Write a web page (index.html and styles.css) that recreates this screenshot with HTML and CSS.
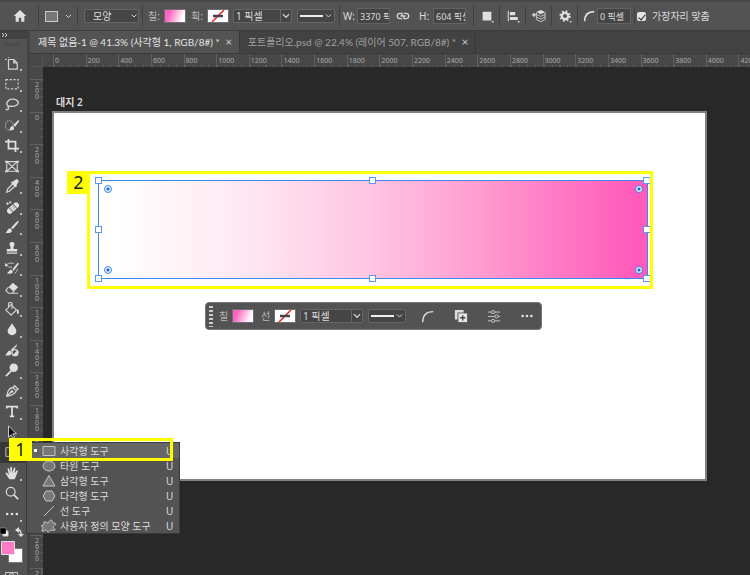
FILE: index.html
```html
<!DOCTYPE html>
<html lang="ko">
<head>
<meta charset="utf-8">
<meta name="viewport" content="width=device-width, initial-scale=1">
<title>제목 없음-1</title>
<link rel="stylesheet" href="styles.css">
</head>
<body>
<header class="options">
  <button class="opt home" aria-label="홈"><svg class="ic" viewBox="0 0 16 16"><path class="f" d="M8 1 .8 8H3v6.5h3.6V10h2.8v4.5H13V8h2.2z"/></svg></button>
  <i class="sep"></i>
  <button class="opt preset" aria-label="사각형 도구"><svg width="28" height="14" viewBox="0 0 28 14"><rect x="1.5" y="2.500" width="12" height="10" fill="#777" stroke="#ccc"/><path class="s" d="m22 6 2.500 2.500L27 6"/></svg></button>
  <i class="sep"></i>
  <label class="pick mode"><select aria-label="모드"><option>모양</option></select><svg class="chev" viewBox="0 0 8 8"><path class="s" d="m1.500 2.500 2.500 2.500 2.500-2.500"/></svg></label>
  <i class="sep"></i>
  <span class="cap">칠:</span>
  <button class="swatch pink" aria-label="칠"></button>
  <span class="cap">획:</span>
  <button class="swatch none" aria-label="획"><svg viewBox="0 0 20 12"><path d="m4 12 12-12" stroke="#e22" stroke-width="1.500"/><path d="M5 6h10" stroke="#444" stroke-width="2.500"/></svg></button>
  <label class="pick size"><select aria-label="획 폭"><option>1 픽셀</option></select><svg class="chev" viewBox="0 0 8 8"><path class="s" d="m1.500 2.500 2.500 2.500 2.500-2.500"/></svg></label>
  <button class="line" aria-label="획 유형"><svg viewBox="0 0 36 12"><path d="M2 6h23" stroke="#eee" stroke-width="2"/><path class="s" d="m28 4.500 2.500 2.500 2.500-2.500"/></svg></button>
  <i class="sep"></i>
  <label class="dim"><span>W:</span><input value="3370 픽셀"></label>
  <button class="opt link" aria-label="비율 연결"><svg class="ic" viewBox="0 0 16 16"><path class="s" stroke-width="1.500" d="M7 11H4.500a3 3 0 0 1 0-6H7v3.500M9 5h2.500a3 3 0 0 1 0 6H9V7.500M5 8h6"/></svg></button>
  <label class="dim"><span>H:</span><input value="604 픽셀"></label>
  <i class="sep wide"></i>
  <button class="opt tail" aria-label="패스 작업"><svg class="ic" viewBox="0 0 16 16"><path class="f" d="M3 3h10v10H3zM13 14h3l-1.500 2z"/></svg></button>
  <i class="sep"></i>
  <button class="opt tail" aria-label="패스 정렬"><svg class="ic" viewBox="0 0 16 16"><path class="f" d="M2 2h1.200v12H2zM4.500 3.500h6v3.500h-6zM4.500 9h9v3.500h-9zM13 14h3l-1.500 2z"/></svg></button>
  <i class="sep"></i>
  <button class="opt tail" aria-label="패스 배열"><svg class="ic" viewBox="0 0 16 16"><path class="f" d="m10 1 5 2.500-5 2.500-5-2.500zM0 6h1.500V4.500h1.500V6h1.500v1.300H3v1.500H1.500V7.300H0z"/><path class="s" d="m5 6 5 2.500L15 6M5 9l5 2.500L15 9M5 12l5 2.500 5-2.500M5 4v8M15 4v8"/></svg></button>
  <i class="sep"></i>
  <button class="opt tail" aria-label="설정"><svg class="ic" viewBox="0 0 16 16"><circle cx="8" cy="8" r="3.600" fill="none" stroke="#e0e0e0" stroke-width="2.600"/><circle cx="8" cy="8" r="5.500" fill="none" stroke="#e0e0e0" stroke-width="2" stroke-dasharray="2.160 2.160"/><path class="f" d="M13 14h3l-1.500 2z"/></svg></button>
  <i class="sep"></i>
  <label class="dim radius"><svg class="ic" viewBox="0 0 16 16"><path fill="none" stroke="#e0e0e0" stroke-width="1.800" d="M3 14C3 7 7 3 14 3"/></svg><input aria-label="반경" value="0 픽셀"></label>
  <i class="sep"></i>
  <label class="snap"><input type="checkbox" checked>가장자리 맞춤</label>
</header>

<div class="work">
  <aside class="rail">
    <div class="railhead"><svg width="8" height="6" viewBox="0 0 8 6"><path class="s" d="m1 1 2 2-2 2M4 1l2 2-2 2"/></svg></div>
    <div class="grip"></div>
    <nav class="tools" aria-label="도구">
      <button class="tool more" aria-label="대지"><svg class="ic" viewBox="0 0 16 16"><path class="s" stroke-width="1.400" d="M4 1v1M4 4v11h10V8l-4-4H4M0 4h2M10 4v4h4"/></svg></button>
      <button class="tool more" aria-label="선택 윤곽"><svg class="ic" viewBox="0 0 16 16"><rect class="s" stroke-width="1.300" x="1" y="3" width="14" height="10.500" stroke-dasharray="2.500 1.800"/></svg></button>
      <button class="tool more" aria-label="올가미"><svg class="ic" viewBox="0 0 16 16"><path class="s" stroke-width="1.500" d="M4 10.500C0 8 3 2.500 9 2.500s8 5 4 7c-3 2-7 1-9 1-2 1 1 2 0 3-1 2-3 1-3 0"/></svg></button>
      <button class="tool more" aria-label="빠른 선택"><svg class="ic" viewBox="0 0 16 16"><ellipse class="s" cx="5" cy="8.500" rx="4.500" ry="5.500" stroke-dasharray="1.500 1"/><path class="f" d="M15.500 2 9.500 8l2 2 4.500-6zM8.500 9c-3 0-2 4-4 4.500 3 1.500 6 0 6-2.500z"/></svg></button>
      <button class="tool more" aria-label="자르기"><svg class="ic" viewBox="0 0 16 16"><path fill="none" stroke="#e0e0e0" stroke-width="2" d="M4 1v11h12M0 4h12v12"/></svg></button>
      <button class="tool" aria-label="프레임"><svg class="ic" viewBox="0 0 16 16"><path class="s" stroke-width="1.300" d="M2 3h12v11H2zM2 3l12 11M14 3 2 14"/><path class="f" d="M0 2h3v2H0zM13 2h3v2h-3zM0 13h3v2H0zM13 13h3v2h-3z"/></svg></button>
      <button class="tool more" aria-label="스포이드"><svg class="ic" viewBox="0 0 16 16"><path class="s" stroke-width="1.500" d="M9 5.500 3 11.500 2 15l3-1 6.500-6"/><path class="f" d="m8 3 1.500-.5L12 .8c2-1.300 4.500 1 3.200 3L13 7l1 1-2 1.500L6.500 4z"/></svg></button>
      <button class="tool more" aria-label="복구 브러시"><svg class="ic" viewBox="0 0 16 16"><g transform="rotate(-42 9 9)"><rect class="f" x="1" y="6" width="16" height="6.500" rx="3"/><path d="M6 6v7M12 6v7M8 8h1m1 0h1M8 10h1m1 0h1" stroke="#555"/></g><path class="s" d="M1 4h4M3 2v4M6 1v3M4.500 2.500h3"/></svg></button>
      <button class="tool more" aria-label="브러시"><svg class="ic" viewBox="0 0 16 16"><path class="f" d="M15.500 1c1 1-5 8-7 9.500L7 9c2-2 7.500-9 8.500-8zM6 9.500 8 12c-.5 3-4 3.500-7.500 2.500C3 13.500 2.500 10 6 9.500z"/></svg></button>
      <button class="tool more" aria-label="도장"><svg class="ic" viewBox="0 0 16 16"><path class="f" d="M8 1c3 0 3.500 2.500 2 5-.5 1-.5 2 0 3h4v3H2V9h4c.5-1 .5-2 0-3-1.500-2.500-1-5 2-5zM2 13h12v1.500H2z"/></svg></button>
      <button class="tool more" aria-label="작업 내역 브러시"><svg class="ic" viewBox="0 0 16 16"><path class="f" d="m14.500 2-6 7.500L10 11l6-8zM7.500 10 9 12c0 2.500-4 3-7 2 3-1 2-4 5.500-4zM0 2l4 4H0z"/><path class="s" d="M2 4c3-2 6-2 8-1M4 7h4M14 9c0 3-1 4-3 5"/></svg></button>
      <button class="tool more" aria-label="지우개"><svg class="ic" viewBox="0 0 16 16"><path class="f" d="m9 2 6 5-5 5-6-5z"/><path class="s" stroke-width="1.300" d="m4 7-3 3.500L4 14h4l2.500-2.500M8 14h7"/></svg></button>
      <button class="tool more" aria-label="페인트 통"><svg class="ic" viewBox="0 0 16 16"><path class="s" stroke-width="1.300" d="m7 3 6 6-6 6-6-6zM4 7V2c0-2 4-2 4 0v6"/><path class="f" d="M14 8c2 1 2 3 1.500 6-2 0-2.500-3-1.500-6z"/></svg></button>
      <button class="tool more" aria-label="흐림 효과"><svg class="ic" viewBox="0 0 16 16"><path class="f" d="M8 1c1 3 5 6 5 9.500a5 4.500 0 0 1-10 0C3 7 7 4 8 1z"/></svg></button>
      <button class="tool" aria-label="조정 브러시"><svg class="ic" viewBox="0 0 16 16"><path class="f" d="M14 1 6.500 8 8 9.500 13 4zM6 8.500 7.500 11C7 14 4 15 0 14c2.500-1 2-5 6-5.500z"/><circle class="s" stroke-width="1.400" cx="11.500" cy="11" r="3.500"/><path class="f" d="m9 14 5-6c3 3-1 8-5 6z"/></svg></button>
      <button class="tool more" aria-label="닷지"><svg class="ic" viewBox="0 0 16 16"><circle class="f" cx="10" cy="5.500" r="4.800"/><path d="m7 9-6 6" stroke="#e0e0e0" stroke-width="2"/></svg></button>
      <button class="tool more" aria-label="펜"><svg class="ic" viewBox="0 0 16 16"><path class="s" stroke-width="1.500" d="m11 2 4 4-2 1c-1 4-4 6-11 7 1-6 2-9 7-10zM2 14l6-6M12 7 9 4"/><circle class="f" cx="8" cy="8.500" r="1.500"/></svg></button>
      <button class="tool more" aria-label="문자"><svg class="ic" viewBox="0 0 16 16"><path d="M2 5V3h12v2M8 3v11M5.500 14h5" fill="none" stroke="#e0e0e0" stroke-width="2"/></svg></button>
      <button class="tool more" aria-label="패스 선택"><svg class="ic" viewBox="0 0 16 16"><path d="M4 1v13l3-3 2 4 2-1-2-4h4z" fill="#111" stroke="#ddd"/></svg></button>
      <button class="tool current" aria-label="사각형"><svg class="ic" viewBox="0 0 16 16"><path class="s" d="M1 3h14v10H1z"/></svg></button>
      <button class="tool more" aria-label="손"><svg class="ic" viewBox="0 0 16 16"><path class="f" d="M5 15 1 9c-1-2 1-2 2-.5L4.500 10 3 4c-.4-1.800 1.300-2 1.800-.5L6.200 8 6 2c0-1.600 1.800-1.600 2 0l.4 6L10 2.500c.4-1.500 2-1 1.800.5L11 8.500l2-3c.8-1.200 2.200-.5 1.500 1L12 13l-1 2z"/></svg></button>
      <button class="tool" aria-label="돋보기"><svg class="ic" viewBox="0 0 16 16"><circle class="s" stroke-width="1.500" cx="6.500" cy="6.500" r="5"/><path d="m10 10 5 5" stroke="#e0e0e0" stroke-width="2"/></svg></button>
      <button class="tool more" aria-label="도구 모음 편집"><svg class="ic" viewBox="0 0 16 16"><circle class="f" cx="2.500" cy="8" r="1.500"/><circle class="f" cx="8" cy="8" r="1.500"/><circle class="f" cx="13.500" cy="8" r="1.500"/></svg></button>
    </nav>
    <svg class="colors" viewBox="0 0 27 51" aria-hidden="true">
      <path d="M3 7h5v5H3z" fill="#fff" stroke="#ccc"/><path d="M0 4h6v6H0z" fill="#000" stroke="#aaa" stroke-width=".5"/>
      <path fill="none" stroke="#e0e0e0" stroke-width="1.500" d="M17 6h2q2 0 2 5"/><path class="f" d="m15 6 4-3v6zM18 10h6l-3 3z"/>
      <path d="M8.500 24.500h14v14h-14z" fill="#fff" stroke="#777"/><path d="M1.500 17.500h13v13h-13z" fill="#ff7ac5" stroke="#e0e0e0"/>
      <path d="M5.500 48.500h12v6h-12z" fill="none" stroke="#ccc"/><circle cx="11.500" cy="52" r="2.500" fill="none" stroke="#ccc"/>
    </svg>
  </aside>

  <main class="doc">
    <div class="tabs" role="tablist">
      <div class="tab on" role="tab" aria-selected="true"><span>제목 없음-1 @ 41.3% (사각형 1, RGB/8#) *</span><button aria-label="닫기">×</button></div>
      <div class="tab" role="tab" aria-selected="false"><span>포트폴리오.psd @ 22.4% (레이어 507, RGB/8#) *</span><button aria-label="닫기">×</button></div>
    </div>
    <div class="rulerx"><div class="corner"></div><div class="marksx">
      <span>0</span><span>200</span><span>400</span><span>600</span><span>800</span><span>1000</span><span>1200</span><span>1400</span><span>1600</span><span>1800</span><span>2000</span><span>2200</span><span>2400</span><span>2600</span><span>2800</span><span>3000</span><span>3200</span><span>3400</span><span>3600</span><span>3800</span><span>4000</span><span>4200</span>
    </div></div>
    <div class="stage">
      <div class="rulery"><b></b>
        <span>200</span><span>0</span><span>200</span><span>400</span><span>600</span><span>800</span><span>1000</span><span>1200</span><span>1400</span><span>1600</span><span>1800</span><span>2000</span><span>2200</span><span>2400</span><span>2600</span><span>2800</span>
      </div>
      <div class="canvas">
        <h1 class="boardname">대지 2</h1>
        <section class="board">
          <div class="mark two">
            <b class="num">2</b>
            <div class="shape">
              <i class="h tl"></i><i class="h tc"></i><i class="h tr"></i><i class="h ml"></i><i class="h mr"></i><i class="h bl"></i><i class="h bc"></i><i class="h br"></i>
              <i class="dot tl"></i><i class="dot tr"></i><i class="dot bl"></i><i class="dot br"></i>
            </div>
          </div>
          <div class="taskbar">
            <i class="handle"></i>
            <span class="cap">칠</span><button class="swatch pink" aria-label="칠 색상"></button>
            <span class="cap">선</span><button class="swatch none" aria-label="선 색상"><svg viewBox="0 0 20 12"><path d="m4 12 12-12" stroke="#e22" stroke-width="1.500"/><path d="M5 6h10" stroke="#444" stroke-width="2.500"/></svg></button>
            <label class="pick size"><select aria-label="선 폭"><option>1 픽셀</option></select><svg class="chev" viewBox="0 0 8 8"><path class="s" d="m1.500 2.500 2.500 2.500 2.500-2.500"/></svg></label>
            <button class="line" aria-label="선 유형"><svg viewBox="0 0 36 12"><path d="M2 6h23" stroke="#eee" stroke-width="2"/><path class="s" d="m28 4.500 2.500 2.500 2.500-2.500"/></svg></button>
            <div class="acts">
              <button class="opt" aria-label="모퉁이 반경"><svg class="ic" viewBox="0 0 16 16"><path fill="none" stroke="#ddd" stroke-width="1.500" d="M2 15C2 7 6 3 14 3"/></svg></button>
              <button class="opt" aria-label="도형 추가"><svg class="ic" viewBox="0 0 16 16"><path d="M1 1h10v3H4v8H1z" fill="#ddd"/><path d="M5 5h10v10H5z" fill="#e4e4e4"/><path d="M10 7v6M7 10h6" stroke="#444" stroke-width="1.500"/></svg></button>
              <button class="opt" aria-label="속성"><svg class="ic" viewBox="0 0 16 16"><path class="s" d="M1 3.500h4M9 3.500h6M1 8.500h8M13 8.500h2M1 13.500h4M9 13.500h6"/><circle class="s" cx="7" cy="3.500" r="1.800"/><circle class="s" cx="11" cy="8.500" r="1.800"/><circle class="s" cx="7" cy="13.500" r="1.800"/></svg></button>
              <button class="opt" aria-label="더 보기"><svg class="ic" viewBox="0 0 16 16"><circle class="f" cx="3" cy="8" r="1.500"/><circle class="f" cx="8" cy="8" r="1.500"/><circle class="f" cx="13" cy="8" r="1.500"/></svg></button>
            </div>
          </div>
        </section>
      </div>
    </div>
  </main>

  <div class="menu" role="menu">
    <button class="row on" role="menuitem"><i class="bullet"></i><svg viewBox="0 0 16 14"><path class="g" d="M2 2.500h12v9H2z"/></svg><span>사각형 도구</span><kbd>U</kbd></button>
    <button class="row" role="menuitem"><i></i><svg viewBox="0 0 16 14"><ellipse class="g" cx="8" cy="7" rx="6" ry="5"/></svg><span>타원 도구</span><kbd>U</kbd></button>
    <button class="row" role="menuitem"><i></i><svg viewBox="0 0 16 14"><path class="g" d="m8 1.500 6 10.500H2z"/></svg><span>삼각형 도구</span><kbd>U</kbd></button>
    <button class="row" role="menuitem"><i></i><svg viewBox="0 0 16 14"><path class="g" d="M5 2h6l3 5-3 5H5L2 7z"/></svg><span>다각형 도구</span><kbd>U</kbd></button>
    <button class="row" role="menuitem"><i></i><svg viewBox="0 0 16 14"><path class="g" d="M3 12 13 2"/></svg><span>선 도구</span><kbd>U</kbd></button>
    <button class="row" role="menuitem"><i></i><svg viewBox="0 0 16 14"><path class="g" stroke-linejoin="round" d="M3 3c1-1 3 1 4 1s1-3 3-3 1 3 2 3 3 0 3 1-3 2-3 3 3 2 2 3-3 0-4 0-2 2-3 2-1-2-2-2-3 2-4 1 2-3 1-4-3 0-2-1 3-1 3-2-1-1 0-2z"/></svg><span>사용자 정의 모양 도구</span><kbd>U</kbd></button>
    <div class="mark one"><b class="num">1</b></div>
  </div>
</div>
</body>
</html>
```
FILE: styles.css
```css
* { box-sizing: border-box; }
body {
  margin: 0;
  height: 100vh;
  display: flex;
  flex-direction: column;
  overflow: hidden;
  background: #282828;
  color: #dcdcdc;
  font: 10px/14px "Noto Sans", "Noto Sans CJK KR", sans-serif;
}
button, input, select {
  font: inherit;
  color: inherit;
  border: 0;
  padding: 0;
  margin: 0;
  background: none;
}
svg { display: block; flex: none; }
.ic { width: 14px; height: 14px; }
.f { fill: #e0e0e0; }
.s { fill: none; stroke: #d4d4d4; }
.g { fill: #777; stroke: #c4c4c4; }

/* Options bar */
.options {
  flex: none;
  display: flex;
  align-items: center;
  height: 31px;
  padding: 0 0 0 4px;
  background: #535353;
  border-top: 2px solid #484848;
  border-bottom: 1px solid #3c3c3c;
  white-space: nowrap;
}
.options > * { flex: none; }
.sep {
  width: 1px;
  height: 20px;
  background: #404040;
}
.opt {
  display: grid;
  place-items: center;
  width: 25px;
  height: 20px;
}
.home { width: 31px; margin-right: 3px; }
.preset { width: 38px; }
.pick {
  position: relative;
  display: flex;
  height: 14px;
}
.pick select {
  width: 100%;
  appearance: none;
  background: #454545;
  border: 1px solid #666;
  border-radius: 2px;
  line-height: 12px;
}
.chev {
  position: absolute;
  right: 1px;
  top: 3px;
  width: 8px;
  height: 8px;
  pointer-events: none;
}
.mode { width: 55px; margin: 0 3px 0 6px; }
.mode select { padding-left: 8px; }
.size { width: 59px; margin-left: 4px; }
.size select { padding-left: 2px; }
.size .chev { border-left: 1px solid #666; top: 1px; height: 12px; width: 11px; }
.cap {
  width: 16px;
  margin-left: 5px;
  color: #bbb;
}
.swatch {
  width: 22px;
  height: 14px;
  border: 1px solid #6e6e6e;
}
.pink { background: linear-gradient(110deg, #ff62c0 20%, #fff 85%); }
.none { background: #fff; }
.line {
  width: 38px;
  height: 14px;
  margin: 0 4px 0 5px;
  background: #454545;
  border: 1px solid #666;
  border-radius: 2px;
}
.line svg { width: 36px; height: 12px; }
.dim {
  display: flex;
  align-items: center;
  gap: 4px;
  margin-left: 3px;
}
.dim span { width: 10px; }
.dim input {
  width: 33px;
  height: 16px;
  padding-left: 2px;
  background: #454545;
  border: 1px solid #626262;
  font-size: 9px;
}
.link { width: 26px; }
.wide { margin-left: 7px; }
.radius { gap: 1px; margin: 0 3px 0 4px; }
.radius input { width: 34px; }
.snap {
  display: flex;
  align-items: center;
  gap: 6px;
  margin-left: 2px;
}
.snap input {
  width: 9px;
  height: 9px;
  appearance: none;
  background: #e4e4e4;
  border-radius: 2px;
  display: grid;
  place-items: center;
}
.snap input:checked::after {
  content: "";
  width: 3px;
  height: 6px;
  border: solid #222;
  border-width: 0 1px 1px 0;
  rotate: 40deg;
}

/* Tool rail */
.work {
  position: relative;
  flex: 1;
  min-height: 0;
  display: flex;
}
.rail {
  flex: none;
  width: 30px;
  background: #535353;
  border-right: 3px solid #444;
  overflow: hidden;
}
.railhead {
  height: 8px;
  padding: 1px 0 0 1px;
  background: #424242;
}
.grip {
  width: 16px;
  height: 3px;
  margin: 4px 4px 7px;
  background: repeating-linear-gradient(90deg, #444 0 1px, #535353 1px 2px);
}
.tools {
  display: grid;
  grid-auto-rows: 1fr;
  height: 471px;
}
.tool {
  position: relative;
  display: grid;
  place-items: center;
  padding-right: 3px;
}
.current { background: #383838; }
.more::after {
  content: "";
  position: absolute;
  right: 5px;
  bottom: 2px;
  width: 2px;
  height: 2px;
  background: #bbb;
}
.colors { width: 27px; height: 51px; }

/* Document */
.doc {
  flex: 1;
  min-width: 0;
  display: flex;
  flex-direction: column;
}
.tabs {
  flex: none;
  display: flex;
  height: 23px;
  background: #424242;
  border-bottom: 1px solid #393939;
}
.tab {
  display: flex;
  align-items: center;
  gap: 4px;
  padding: 0 5px 0 8px;
  border-right: 1px solid #383838;
  color: #a0a0a0;
  font-family: Lato, "Noto Sans CJK KR", sans-serif;
  white-space: nowrap;
}
.tab.on { background: #535353; color: #e4e4e4; }
.tab button { width: 10px; font-size: 12px; color: #ccc; }
.rulerx {
  flex: none;
  display: flex;
  height: 13px;
  background: #484848;
  overflow: hidden;
}
.corner { flex: none; width: 13px; border: dotted #626262; border-width: 0 1px 1px 0; }
.marksx {
  flex: 1;
  min-width: 0;
  display: flex;
  margin: 0 44px 0 10px;
}
.marksx span {
  flex: 0 0 5%;
  padding-left: 1px;
  border-left: 1px solid #606060;
  background: repeating-linear-gradient(90deg, #606060 0 1px, transparent 1px 25%) bottom / 100% 2px no-repeat;
  color: #a8a8a8;
  font-size: 7px;
  line-height: 14px;
}
.stage { flex: 1; min-height: 0; display: flex; }
.rulery {
  flex: none;
  width: 13px;
  display: grid;
  grid-template-rows: 12px repeat(15, minmax(0, 1fr)) 7px;
  background: #484848;
  overflow: hidden;
}
.rulery span {
  padding: 2px 4px 0 5px;
  border-top: 1px solid #606060;
  background: repeating-linear-gradient(#606060 0 1px, transparent 1px 25%) right / 2px 100% no-repeat;
  color: #a8a8a8;
  font-size: 7px;
  line-height: 6px;
  word-break: break-all;
}
.canvas {
  flex: 1;
  min-width: 0;
  padding: 28px 43px 0 9px;
}
.boardname {
  margin: 0 0 2px 4px;
  font-size: 10px;
  font-weight: 600;
  line-height: 14px;
}
.board {
  height: 370px;
  padding: 58px 52px 0 33px;
  background: #fff;
  border: 2px solid #808080;
}
.mark { border: 3px solid #ff0; }
.num {
  position: absolute;
  width: 23px;
  height: 23px;
  background: #ff0;
  color: #222;
  font-size: 18px;
  font-weight: 400;
  line-height: 23px;
  text-align: center;
}
.two {
  position: relative;
  padding: 6px 2px 7px 8px;
}
.two .num { left: -23px; top: -3px; }
.shape {
  position: relative;
  height: 99px;
  border: 1px solid #3f86ee;
  background: linear-gradient(90deg, #fff 3%, #fff1f7 17%, #ffe3f0 30%, #ffc4e1 50%, #ff9bd0 70%, #ff7cc5 83%, #ff5aba 98%);
}
.h {
  position: absolute;
  width: 7px;
  height: 7px;
  background: #fff;
  border: 1px solid #5b97ee;
}
.h.tl, .h.tc, .h.tr { top: -4px; }
.h.bl, .h.bc, .h.br { bottom: -4px; }
.h.ml, .h.mr { top: calc(50% - 4px); }
.h.tl, .h.ml, .h.bl { left: -4px; }
.h.tc, .h.bc { left: calc(50% - 4px); }
.h.tr, .h.mr, .h.br { right: -3px; border-right: 0; }
.dot {
  position: absolute;
  width: 8px;
  height: 8px;
  border: 1px solid #3f86ee;
  border-radius: 50%;
  background: radial-gradient(circle, #1b6be0 0 1px, #e8f2ff 2px);
}
.dot.tl, .dot.tr { top: 4px; }
.dot.bl, .dot.br { bottom: 4px; }
.dot.tl, .dot.bl { left: 5px; }
.dot.tr, .dot.br { right: 4px; }

/* Contextual task bar */
.taskbar {
  display: flex;
  align-items: center;
  width: 337px;
  height: 28px;
  margin: 13px 0 0 118px;
  padding-left: 3px;
  background: #535353;
  border: 1px solid #777;
  border-radius: 4px;
}
.handle {
  width: 4px;
  height: 21px;
  margin-right: 1px;
  background: repeating-linear-gradient(#ccc 0 2px, transparent 2px 4px);
}
.taskbar .cap { width: 13px; }
.taskbar .swatch { margin-right: 2px; }
.taskbar .swatch + .size { width: 63px; margin-left: 2px; }
.acts { display: flex; gap: 8px; margin-left: 5px; }

/* Shape tool fly-out */
.menu {
  position: absolute;
  left: 26px;
  top: 411px;
  width: 154px;
  background: #535353;
  border: 1px solid #3a3a3a;
}
.row {
  display: grid;
  grid-template-columns: 4px 16px 1fr 8px;
  column-gap: 3px;
  align-items: center;
  width: 100%;
  height: 15px;
  padding: 0 5px 0 7px;
  text-align: left;
}
.row.on { background: #666; }
.bullet { width: 3px; height: 3px; background: #fff; }
.row svg { width: 16px; height: 14px; }
.row kbd { font: inherit; }
.one {
  position: absolute;
  left: 2px;
  top: -5px;
  width: 144px;
  height: 23px;
}
.one .num { left: -23px; top: -3px; }
```
